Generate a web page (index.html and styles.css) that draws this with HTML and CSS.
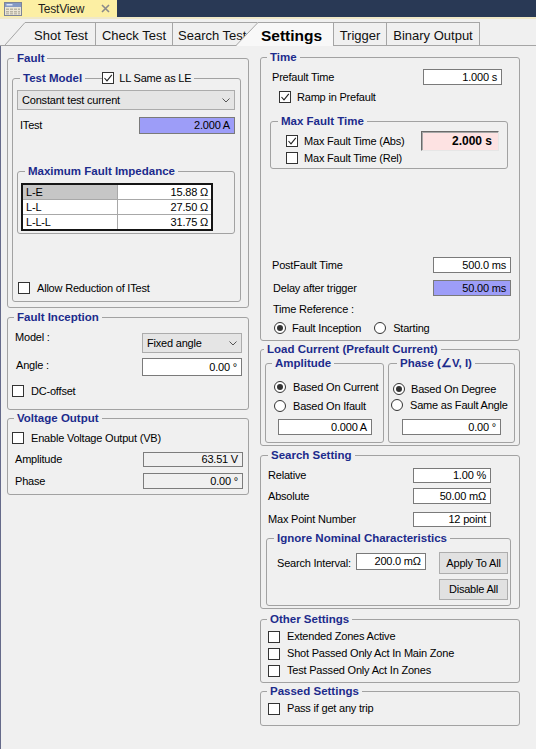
FILE: index.html
```html
<!DOCTYPE html>
<html>
<head>
<meta charset="utf-8">
<link rel="stylesheet" href="styles.css">
</head>
<body>
<div class="titlebar">
  <div class="doctab">
    <svg class="docicon" width="18" height="14" viewBox="0 0 18 14">
      <rect x="0.5" y="0.5" width="17" height="13" fill="#ebe6d6" stroke="#7d8498"/>
      <rect x="1" y="1" width="16" height="4" fill="#8499c4"/>
      <rect x="2.5" y="2" width="6" height="1.5" fill="#dfe6f5"/>
      <g fill="#b8b3a3">
        <rect x="2" y="6.5" width="3" height="1.5"/><rect x="6" y="6.5" width="3" height="1.5"/><rect x="10" y="6.5" width="3" height="1.5"/><rect x="14" y="6.5" width="2" height="1.5"/>
        <rect x="2" y="9" width="3" height="1.5"/><rect x="6" y="9" width="3" height="1.5"/><rect x="10" y="9" width="3" height="1.5"/><rect x="14" y="9" width="2" height="1.5"/>
        <rect x="2" y="11.2" width="3" height="1.2"/><rect x="6" y="11.2" width="3" height="1.2"/><rect x="10" y="11.2" width="3" height="1.2"/><rect x="14" y="11.2" width="2" height="1.2"/>
      </g>
    </svg>
    <span class="doctitle">TestView</span>
    <svg class="close" width="9" height="9" viewBox="0 0 9 9">
      <path d="M1 1 L8 8 M8 1 L1 8" stroke="#8a8a8a" stroke-width="1.6" fill="none"/>
    </svg>
  </div>
</div>
<div class="titleline"></div>
<div class="tabstrip">
  <svg class="slant first" width="20" height="23" viewBox="0 0 20 23">
    <polygon points="0,23 20,0 20,23" fill="#f0f0f0"/>
    <path d="M0 23 L20 0.5" stroke="#a5a5a5" stroke-width="1" fill="none"/>
  </svg>
  <div class="tab w-shot">Shot Test</div>
  <div class="tab w-check">Check Test</div>
  <div class="tab w-search">Search Test</div>
  <svg class="slant sel" width="22" height="24" viewBox="0 0 22 24">
    <polygon points="0,24 22,0 22,24" fill="#f8f8f8"/>
    <path d="M0 23.5 L22 0.5" stroke="#a5a5a5" stroke-width="1" fill="none"/>
  </svg>
  <div class="tab active">Settings</div>
  <div class="tab w-trig">Trigger</div>
  <div class="tab w-bin">Binary Output</div>
</div>

<div class="content">
  <div class="col col-left">
    <fieldset class="g g-fault">
      <legend>Fault</legend>
      <fieldset class="g g-testmodel">
        <legend class="lg-flex"><span>Test Model</span><span class="legline"></span><span class="chk on"><svg width="10" height="10" viewBox="0 0 10 10"><path d="M1.5 5 L4 7.8 L8.8 1.8" stroke="#222" stroke-width="1.1" fill="none"/></svg></span><span class="lg-cbtext">LL Same as LE</span></legend>
        <div class="combo"><span>Constant test current</span><svg class="chev" width="8" height="5" viewBox="0 0 8 5"><path d="M0.5 0.5 L4 4 L7.5 0.5" stroke="#555" fill="none"/></svg></div>
        <div class="row r-itest"><span class="lbl">ITest</span><div class="input blue w-itest">2.000 A</div></div>
        <fieldset class="g g-mfi">
          <legend>Maximum Fault Impedance</legend>
          <table class="imp">
            <tr><td class="c1 selcell">L-E</td><td class="c2">15.88 Ω</td></tr>
            <tr><td class="c1">L-L</td><td class="c2">27.50 Ω</td></tr>
            <tr class="last"><td class="c1">L-L-L</td><td class="c2">31.75 Ω</td></tr>
          </table>
        </fieldset>
        <div class="row r-allow"><span class="chk"></span><span class="cbtext">Allow Reduction of ITest</span></div>
      </fieldset>
    </fieldset>

    <fieldset class="g g-fi">
      <legend>Fault Inception</legend>
      <div class="row r-model"><span class="lbl lbl-model">Model :</span><div class="combo combo-fixed"><span>Fixed angle</span><svg class="chev" width="8" height="5" viewBox="0 0 8 5"><path d="M0.5 0.5 L4 4 L7.5 0.5" stroke="#555" fill="none"/></svg></div></div>
      <div class="row r-angle"><span class="lbl lbl-angle">Angle :</span><div class="input w-angle">0.00 °</div></div>
      <div class="row r-dc"><span class="chk"></span><span class="cbtext">DC-offset</span></div>
    </fieldset>

    <fieldset class="g g-vo">
      <legend>Voltage Output</legend>
      <div class="row r-en"><span class="chk"></span><span class="cbtext">Enable Voltage Output (VB)</span></div>
      <div class="row r-amp"><span class="lbl">Amplitude</span><div class="input dis w-vo h15">63.51 V</div></div>
      <div class="row r-ph"><span class="lbl">Phase</span><div class="input dis w-vo">0.00 °</div></div>
    </fieldset>
  </div>

  <div class="col col-right">
    <fieldset class="g g-time">
      <legend>Time</legend>
      <div class="row r-pre"><span class="lbl">Prefault Time</span><div class="input w-pre">1.000 s</div></div>
      <div class="row r-ramp"><span class="chk on"><svg width="10" height="10" viewBox="0 0 10 10"><path d="M1.5 5 L4 7.8 L8.8 1.8" stroke="#222" stroke-width="1.1" fill="none"/></svg></span><span class="cbtext gap6">Ramp in Prefault</span></div>
      <fieldset class="g g-mft">
        <legend>Max Fault Time</legend>
        <div class="row r-mft1"><span class="chk on"><svg width="10" height="10" viewBox="0 0 10 10"><path d="M1.5 5 L4 7.8 L8.8 1.8" stroke="#222" stroke-width="1.1" fill="none"/></svg></span><span class="cbtext gap6">Max Fault Time (Abs)</span><div class="input pink">2.000 s</div></div>
        <div class="row r-mft2"><span class="chk"></span><span class="cbtext gap6">Max Fault Time (Rel)</span></div>
      </fieldset>
      <div class="row r-post"><span class="lbl">PostFault Time</span><div class="input w-post">500.0 ms</div></div>
      <div class="row r-delay"><span class="lbl">Delay after trigger</span><div class="input blue w-post">50.00 ms</div></div>
      <div class="row r-tref"><span class="lbl">Time Reference :</span></div>
      <div class="row r-rad"><span class="radio on"><span class="dot"></span></span><span class="cbtext gap6">Fault Inception</span><span class="radio r-start"></span><span class="cbtext">Starting</span></div>
    </fieldset>

    <fieldset class="g g-load">
      <legend>Load Current (Prefault Current)</legend>
      <div class="pair">
        <fieldset class="g g-amp">
          <legend>Amplitude</legend>
          <div class="row r-a1"><span class="radio on"><span class="dot"></span></span><span class="cbtext">Based On Current</span></div>
          <div class="row r-a2"><span class="radio"></span><span class="cbtext">Based On Ifault</span></div>
          <div class="input w-ampin">0.000 A</div>
        </fieldset>
        <fieldset class="g g-phase">
          <legend>Phase (∠V, I)</legend>
          <div class="row r-p1"><span class="radio on"><span class="dot"></span></span><span class="cbtext gap6">Based On Degree</span></div>
          <div class="row r-p2"><span class="radio"></span><span class="cbtext">Same as Fault Angle</span></div>
          <div class="input w-phin">0.00 °</div>
        </fieldset>
      </div>
    </fieldset>

    <fieldset class="g g-search">
      <legend>Search Setting</legend>
      <div class="row r-rel"><span class="lbl">Relative</span><div class="input w-s h15">1.00 %</div></div>
      <div class="row r-abs"><span class="lbl">Absolute</span><div class="input w-s">50.00 mΩ</div></div>
      <div class="row r-maxp"><span class="lbl">Max Point Number</span><div class="input w-s h15">12 point</div></div>
      <fieldset class="g g-ign">
        <legend>Ignore Nominal Characteristics</legend>
        <div class="ign-row">
          <div class="si-left"><span class="lbl">Search Interval:</span><div class="input w-si">200.0 mΩ</div></div>
          <div class="btns"><div class="btn">Apply To All</div><div class="btn b2">Disable All</div></div>
        </div>
      </fieldset>
    </fieldset>

    <fieldset class="g g-other">
      <legend>Other Settings</legend>
      <div class="row r-o"><span class="chk"></span><span class="cbtext">Extended Zones Active</span></div>
      <div class="row r-o"><span class="chk"></span><span class="cbtext">Shot Passed Only Act In Main Zone</span></div>
      <div class="row r-o"><span class="chk"></span><span class="cbtext">Test Passed Only Act In Zones</span></div>
    </fieldset>

    <fieldset class="g g-passed">
      <legend>Passed Settings</legend>
      <div class="row r-o"><span class="chk"></span><span class="cbtext">Pass if get any trip</span></div>
    </fieldset>
  </div>
</div>
</body>
</html>
```
FILE: styles.css
```css
* { box-sizing: border-box; }
html, body { margin: 0; padding: 0; }
body {
  width: 536px;
  height: 749px;
  overflow: hidden;
  background: #f0f0f0;
  font-family: "Liberation Sans", Arial, sans-serif;
  font-size: 11px;
  letter-spacing: -0.2px;
  color: #000;
}

/* title bar */
.titlebar { height: 17px; background: #293955; display: flex; }
.doctab { width: 117px; background: #fcefa3; display: flex; align-items: center; }
.docicon { margin-left: 4px; flex: none; }
.doctitle { margin-left: 16px; font-size: 12px; letter-spacing: -0.2px; color: #1e1e1e; }
.close { margin-left: auto; margin-right: 7px; }
.titleline { height: 2px; background: #efe8c8; }

/* tabs */
.tabstrip {
  height: 27px;
  border-bottom: 1px solid #a5a5a5;
  display: flex;
  align-items: flex-end;
  padding-left: 5px;
}
.slant { display: block; flex: none; }
.slant.sel { margin-left: -22px; height: 24px; margin-bottom: -1px; position: relative; z-index: 1; }
.tab {
  height: 23px;
  border-top: 1px solid #a5a5a5;
  border-right: 1px solid #a5a5a5;
  background: #f0f0f0;
  font-size: 13px;
  letter-spacing: 0;
  text-align: center;
  padding-top: 3px;
  line-height: 19px;
  white-space: nowrap;
  overflow: hidden;
  flex: none;
  color: #111;
}
.w-shot { width: 71px; padding-left: 2px; }
.w-check { width: 77px; }
.w-search { width: 85px; text-align: left; padding-left: 5px; }
.tab.active {
  width: 76px;
  height: 24px;
  margin-bottom: -1px;
  background: #f8f8f8;
  font-size: 15.5px;
  font-weight: bold;
  position: relative;
  z-index: 1;
  padding-top: 2px;
  padding-left: 3px;
  text-align: left;
  line-height: 21px;
  color: #000;
}
.w-trig { width: 53px; }
.w-bin { width: 93px; }

/* content */
.content {
  display: flex;
  border-left: 1px solid #656a8a;
  height: 703px;
  padding-left: 6px;
  gap: 11px;
}
.col { display: flex; flex-direction: column; align-items: flex-start; }
.col-left { width: 242px; padding-top: 5px; }
.col-right { width: 260px; padding-top: 4px; }

/* group boxes */
.g {
  margin: 0;
  padding: 0;
  border: 1px solid #a2a2a2;
  border-radius: 3px;
  min-width: 0;
  width: 100%;
  display: block;
}
legend {
  font-weight: bold;
  font-size: 11.5px;
  letter-spacing: 0;
  line-height: 14px;
  color: #1c2b8c;
  padding: 0 3px;
  margin-left: 0;
  white-space: nowrap;
}

.row { display: flex; align-items: center; }
.lbl { line-height: 13px; white-space: nowrap; }
.cbtext { margin-left: 7px; white-space: nowrap; line-height: 13px; }
.cbtext.gap6 { margin-left: 6px; }

.chk {
  width: 12px; height: 12px; flex: none;
  border: 1px solid #333;
  background: #fff;
  display: flex; align-items: center; justify-content: center;
}
.chk svg { display: block; }
.radio {
  width: 12px; height: 12px; flex: none;
  border: 1px solid #333;
  border-radius: 50%;
  background: #fff;
  display: flex; align-items: center; justify-content: center;
}
.radio .dot { width: 6px; height: 6px; border-radius: 50%; background: #333; }

.input {
  height: 16px;
  border: 1px solid #7a7a7a;
  background: #fff;
  text-align: right;
  padding-right: 4px;
  line-height: 14px;
  white-space: nowrap;
  flex: none;
  margin-left: auto;
}
.input.h15 { height: 15px; line-height: 13px; }
.input.blue { background: #9d9df8; }
.input.dis { background: #f0f0f0; border-color: #7c7c7c; }
.input.pink {
  width: 78px; height: 20px;
  background: #fde2e2;
  border-color: #6a6a6a #e6e6e6 #e6e6e6 #6a6a6a;
  box-shadow: inset 1px 1px 0 #a8a8a8;
  font-weight: bold;
  font-size: 12px;
  letter-spacing: 0;
  line-height: 18px;
  padding-right: 6px;
}

.combo {
  display: flex; align-items: center; justify-content: space-between;
  height: 20px;
  background: #e5e5e5;
  border: 1px solid #acacac;
  padding: 0 4px 0 4px;
  white-space: nowrap;
}
.chev { display: block; }

/* Fault */
.g-fault { height: 257px; padding: 6px 7px 0 4px; }
.g-fault > legend { margin-left: 2px; }
.g-testmodel { height: 231px; padding: 5px 5px 0 4px; }
.g-testmodel > legend.lg-flex { display: flex; align-items: center; margin-left: 3px; }
.legline { width: 17px; height: 1px; background: #a2a2a2; margin-left: 3px; }
.lg-cbtext { margin-left: 5px; font-weight: normal; font-size: 11px; color: #000; letter-spacing: -0.2px; }
.r-itest { margin-top: 7px; }
.r-itest .lbl { margin-left: 3px; }
.w-itest { width: 96px; height: 17px; line-height: 15px; }
.g-mfi { margin-top: 30px; height: 70px; padding: 5px 0 0 3px; }
.g-mfi > legend { margin-left: 4px; }
.imp {
  width: 192px;
  table-layout: fixed;
  border-collapse: separate;
  border-spacing: 0;
  border: 2px solid #151515;
  background: #fff;
}
.imp td { height: 15px; padding: 0 3px; line-height: 14px; border-bottom: 1px solid #a8a8a8; white-space: nowrap; }
.imp tr.last td { height: 14px; border-bottom: none; }
.imp td.c1 { width: 95px; border-right: 1px solid #a8a8a8; }
.imp td.c2 { text-align: right; }
.imp td.selcell { background: #c6c6c6; }
.r-allow { margin-top: 47px; height: 14px; }
.r-allow .chk { margin-left: 1px; }

/* Fault Inception */
.g-fi { margin-top: 2px; height: 100px; padding: 0 6px 0 7px; }
.g-fi > legend, .g-vo > legend { margin-left: -1px; }
.r-model { margin-top: 9px; align-items: flex-start; }
.lbl-model { margin-top: -2px; }
.combo-fixed { width: 100px; margin-left: auto; }
.r-angle { margin-top: 5px; }
.lbl-angle { margin-left: 1px; margin-bottom: 3px; }
.w-angle { width: 100px; height: 18px; line-height: 16px; }
.r-dc { margin-top: 8px; height: 14px; }
.r-dc .chk, .r-en .chk { margin-left: -3px; }

/* Voltage Output */
.g-vo { margin-top: 1px; height: 84px; padding: 0 5px 0 7px; }
.r-en { margin-top: 6px; height: 14px; }
.r-amp { margin-top: 7px; }
.r-ph { margin-top: 6px; }
.w-vo { width: 100px; }

/* Time */
.g-time { height: 291px; padding: 0 8px 0 11px; }
.g-time > legend { margin-left: -5px; }
.r-pre { margin-top: 5px; }
.w-pre { width: 79px; margin-right: 9px; }
.r-ramp { margin-top: 5px; height: 14px; }
.r-ramp .chk { margin-left: 7px; }
.g-mft { margin-top: 10px; margin-left: -2px; width: 238px; height: 55px; padding: 0 8px 0 15px; }
.g-mft > legend { margin-left: -8px; }
.r-mft1 { margin-top: 3px; height: 20px; }
.r-mft2 { height: 14px; }
.r-post { margin-top: 88px; }
.w-post { width: 78px; }
.r-delay { margin-top: 7px; }
.r-delay .lbl, .r-tref .lbl { margin-left: 1px; }
.r-tref { margin-top: 7px; }
.r-rad { margin-top: 5px; height: 14px; }
.r-rad > .radio:first-child { margin-left: 2px; }
.r-start { margin-left: 13px; }

/* Load current */
.g-load { margin-top: 1px; height: 104px; padding: 0 4px; }
.g-load > legend { margin-left: -1px; }
.pair { display: flex; gap: 4px; }
.g-amp { width: 119px; height: 87px; padding: 0 0 0 8px; }
.g-amp > legend { margin-left: -2px; }
.r-a1 { margin-top: 10px; height: 14px; }
.r-a2 { margin-top: 5px; height: 14px; }
.w-ampin { margin-top: 6px; margin-left: 4px; width: 94px; }
.g-phase { width: 127px; height: 87px; padding: 0 0 0 4px; }
.g-phase > legend { margin-left: 4px; }
.r-p1 { margin-top: 12px; height: 14px; }
.r-p2 { margin-top: 2px; height: 14px; }
.r-p2 .radio { margin-left: -2px; }
.w-phin { margin-top: 7px; margin-left: 9px; width: 99px; }

/* Search */
.g-search { margin-top: 2px; height: 161px; padding: 0 28px 0 7px; }
.g-search > legend { margin-left: 0; }
.r-rel { margin-top: 6px; }
.r-abs { margin-top: 5px; }
.r-maxp { margin-top: 8px; }
.w-s { width: 78px; }
.g-ign { margin-top: 4px; margin-left: -2px; width: 245px; height: 75px; padding: 0 2px 0 10px; }
.g-ign > legend { margin-left: -3px; }
.ign-row { display: flex; align-items: flex-start; margin-top: 7px; }
.si-left { display: flex; align-items: center; height: 22px; }
.w-si { width: 70px; height: 17px; line-height: 15px; margin-left: 5px; margin-bottom: 3px; }
.btns { margin-left: auto; display: flex; flex-direction: column; gap: 5px; }
.btn {
  width: 69px; height: 22px;
  background: #e1e1e1;
  border: 1px solid #adadad;
  text-align: center;
  line-height: 20px;
  white-space: nowrap;
}
.btn.b2 { height: 21px; line-height: 19px; }

/* Other / Passed */
.g-other { margin-top: 3px; height: 71px; padding: 2px 0 0 7px; }
.g-passed { margin-top: 1px; height: 42px; padding: 2px 0 0 7px; }
.g-other > legend, .g-passed > legend { margin-left: -1px; }
.r-o { height: 17px; }
```
